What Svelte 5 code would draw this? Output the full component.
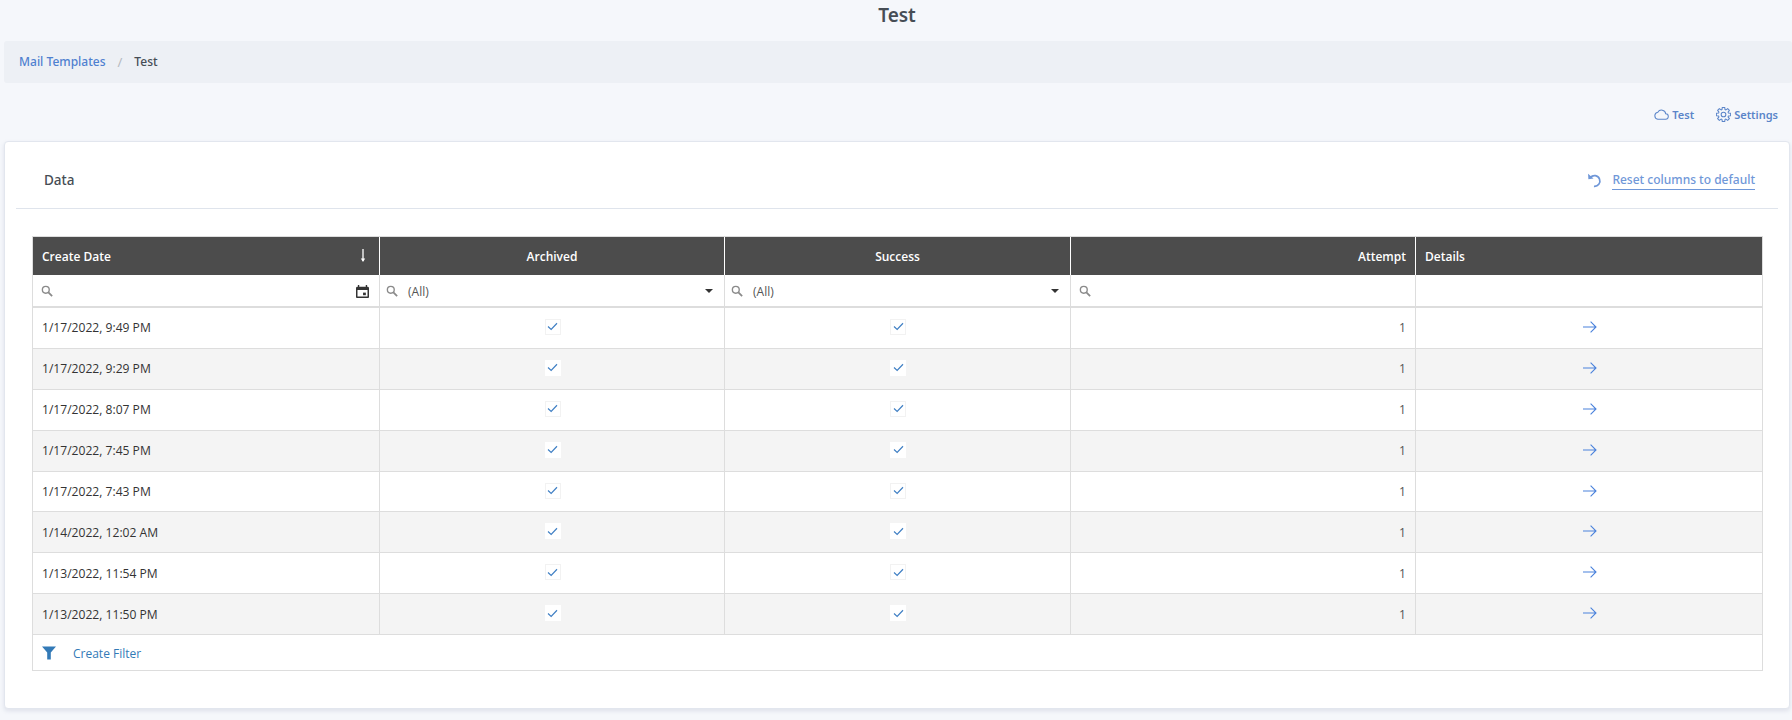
<script>
  const rows = [
    '1/17/2022, 9:49 PM',
    '1/17/2022, 9:29 PM',
    '1/17/2022, 8:07 PM',
    '1/17/2022, 7:45 PM',
    '1/17/2022, 7:43 PM',
    '1/14/2022, 12:02 AM',
    '1/13/2022, 11:54 PM',
    '1/13/2022, 11:50 PM'
  ];
  const gear = Array.from({ length: 8 }, (_, i) => {
    const a = (i * Math.PI) / 4;
    const pts = [[-0.3, 5.5], [-0.17, 7.7], [0.17, 7.7], [0.3, 5.5]];
    return pts.map(([d, r]) => `${(8 + r * Math.sin(a + d)).toFixed(2)},${(8 - r * Math.cos(a + d)).toFixed(2)}`).join(' ');
  }).join(' ');
</script>

{#snippet search()}
  <svg class="search" viewBox="0 0 14 14" width="12" height="12"><circle cx="5.6" cy="5.6" r="4" fill="none" stroke="#8a8a8a" stroke-width="1.6"/><path d="M8.6 8.6l4.4 4.4" stroke="#8a8a8a" stroke-width="2"/></svg>
{/snippet}
{#snippet check(stripe)}
  <span class="check" class:stripe><svg viewBox="0 0 12 10" width="11" height="9"><path d="M1 5l3.5 3.2L11 1.4" fill="none" stroke="#3f7fc4" stroke-width="1.3"/></svg></span>
{/snippet}

<div class="page">
  <h1>Test</h1>
  <nav class="crumbs">
    <span class="link">Mail Templates</span>
    <span class="sep">/</span>
    <span class="cur">Test</span>
  </nav>
  <div class="actions">
    <span class="action">
      <svg viewBox="0 0 16 12" width="15" height="11"><path d="M4 11.3h8.2a3 3 0 0 0 .4-6A4.6 4.6 0 0 0 4 3.6 3.9 3.9 0 0 0 4 11.3z" fill="none" stroke="#5b85c9" stroke-width="1.1"/></svg>
      Test
    </span>
    <span class="action">
      <svg viewBox="0 0 16 16" width="15" height="15"><circle cx="8" cy="8" r="2.5" fill="none" stroke="#5b85c9" stroke-width="1.1"/><polygon points={gear} fill="none" stroke="#5b85c9" stroke-width="1.1" stroke-linejoin="round"/></svg>
      Settings
    </span>
  </div>
  <section class="card">
    <header class="card-head">
      <h2>Data</h2>
      <span class="reset">
        <svg viewBox="0 0 14 14" width="15" height="15"><path d="M3.2 4.2A5 5 0 1 1 6.5 12.4" fill="none" stroke="#6f97d8" stroke-width="1.6"/><path d="M1 .8l.3 5 4.8-.7z" fill="#6f97d8"/></svg>
        <span class="reset-text">Reset columns to default</span>
      </span>
    </header>
    <div class="grid">
      <div class="tr head">
        <div class="c th first"><span>Create Date</span><svg class="sort" viewBox="0 0 6 13" width="6" height="13"><path d="M3 0v12" stroke="#fff" stroke-width="1.3"/><path d="M.8 9.6L3 13l2.2-3.4z" fill="#fff"/></svg></div>
        <div class="c th center">Archived</div>
        <div class="c th center">Success</div>
        <div class="c th right">Attempt</div>
        <div class="c th">Details</div>
      </div>
      <div class="tr filter">
        <div class="c f date">{@render search()}<svg class="cal" viewBox="0 0 14 14" width="13" height="13"><path d="M3.5 0v2h7V0h1.5v2h.5A1.5 1.5 0 0 1 14 3.5V13a1 1 0 0 1-1 1H1a1 1 0 0 1-1-1V3.5A1.5 1.5 0 0 1 1.5 2H2V0zM1.6 5.5v7h10.8v-7z" fill="#333"/><rect x="7.6" y="8.2" width="3" height="2.8" fill="#333"/></svg></div>
        <div class="c f sel">{@render search()}<span class="all">(All)</span><span class="caret"></span></div>
        <div class="c f sel">{@render search()}<span class="all">(All)</span><span class="caret"></span></div>
        <div class="c f">{@render search()}</div>
        <div class="c f"></div>
      </div>
      {#each rows as r, i}
        <div class="tr data" class:alt={i % 2 === 1}>
          <div class="c">{r}</div>
          <div class="c center icon">{@render check(i % 2 === 1)}</div>
          <div class="c center icon">{@render check(i % 2 === 1)}</div>
          <div class="c right num">1</div>
          <div class="c center icon"><svg class="arrow" viewBox="0 0 14 12" width="14" height="12"><path d="M0 6h13M7.6 .6L13 6l-5.4 5.4" fill="none" stroke="#4a82dc" stroke-width="1.1"/></svg></div>
        </div>
      {/each}
      <div class="foot">
        <svg viewBox="0 0 14 13" width="14" height="14"><path d="M0 0h14L8.8 6v7L5.2 13V6z" fill="#337ab7"/></svg>
        <span>Create Filter</span>
      </div>
    </div>
  </section>
</div>

<style>
  :global(body) { margin: 0; background: #f5f7fb; }
  .page { height: 720px; overflow: hidden; box-sizing: border-box; padding: 0 2px 0 4px; font-family: "Noto Sans", sans-serif; color: #444; }
  h1 { margin: 0 0 10px; height: 31px; line-height: 31px; font-size: 19px; font-weight: 600; text-align: center; color: #464d55; }
  .crumbs { height: 42px; box-sizing: border-box; padding-bottom: 1px; margin-right: -2px; display: flex; align-items: center; padding-left: 15px; gap: 12px; background: #edf0f5; border-radius: 3px; font-size: 12px; font-weight: 500; }
  .link { color: #4f80d0; }
  .sep { color: #b5b9bf; font-weight: 400; font-size: 13px; }
  .cur { color: #464d55; }
  .actions { height: 58px; display: flex; justify-content: flex-end; align-items: center; gap: 22px; padding: 5px 12px 0 0; font-size: 11px; font-weight: 600; color: #5b85c9; box-sizing: border-box; }
  .action { display: flex; align-items: center; gap: 3px; }
  .card { height: 568px; box-sizing: border-box; background: #fff; border: 1px solid #e2e6ee; border-radius: 4px; box-shadow: 0 2px 4px rgba(120,130,160,.18); padding: 0 11px; }
  .card-head { height: 67px; box-sizing: border-box; display: flex; justify-content: space-between; align-items: center; border-bottom: 1px solid #dfe4ec; padding: 10px 23px 0 28px; }
  h2 { margin: 0; font-size: 13.5px; font-weight: 500; color: #464d55; }
  .reset { display: flex; align-items: center; gap: 10px; color: #6f97d8; font-size: 12px; font-weight: 500; }
  .reset-text { border-bottom: 1px solid #6f97d8; line-height: 18px; }
  .grid { margin: 27px 0 0 16px; width: 1731px; border: 1px solid #ddd; box-sizing: border-box; font-family: "Open Sans", sans-serif; font-size: 12px; color: #333; }
  .tr { display: grid; grid-template-columns: 347px 345px 346px 345px 1fr; }
  .c { box-sizing: border-box; display: flex; align-items: center; padding: 0 9px; border-right: 1px solid #ddd; min-width: 0; }
  .c:last-child { border-right: 0; }
  .head { height: 38px; background: #4c4c4c; color: #fff; font-weight: 600; }
  .th { border-right: 1px solid #fff; }
  .th.first { justify-content: space-between; padding-right: 13px; }
  .sort { margin-top: -2px; }
  .center { justify-content: center; }
  .icon { padding-right: 9px; padding-left: 10px; }
  .right { justify-content: flex-end; }
  .filter { height: 33px; border-bottom: 2px solid #ddd; box-sizing: border-box; }
  .f { padding: 1px 8px 0; color: #555; }
  .date { justify-content: space-between; padding-right: 10px; }
  .sel { padding: 1px 11px 0 6px; }
  .all { margin-left: 10px; }
  .caret { margin-left: auto; border: 4px solid transparent; border-top-color: #333; border-bottom: 0; }
  .data { height: 40.9px; border-bottom: 1px solid #ddd; box-sizing: border-box; font-size: 12.1px; }
  .alt { background: #f4f4f4; }
  .num { color: #555; }
  .check { width: 14px; height: 14px; display: flex; align-items: center; justify-content: center; border: 1px solid #f2f2f2; background: #fff; margin-bottom: 2px; }
  .check.stripe { border-color: #fff; }
  .arrow { margin-bottom: 2px; }
  .foot { height: 35px; box-sizing: border-box; padding-top: 1px; display: flex; align-items: center; gap: 17px; padding-left: 9px; color: #337ab7; }
</style>
